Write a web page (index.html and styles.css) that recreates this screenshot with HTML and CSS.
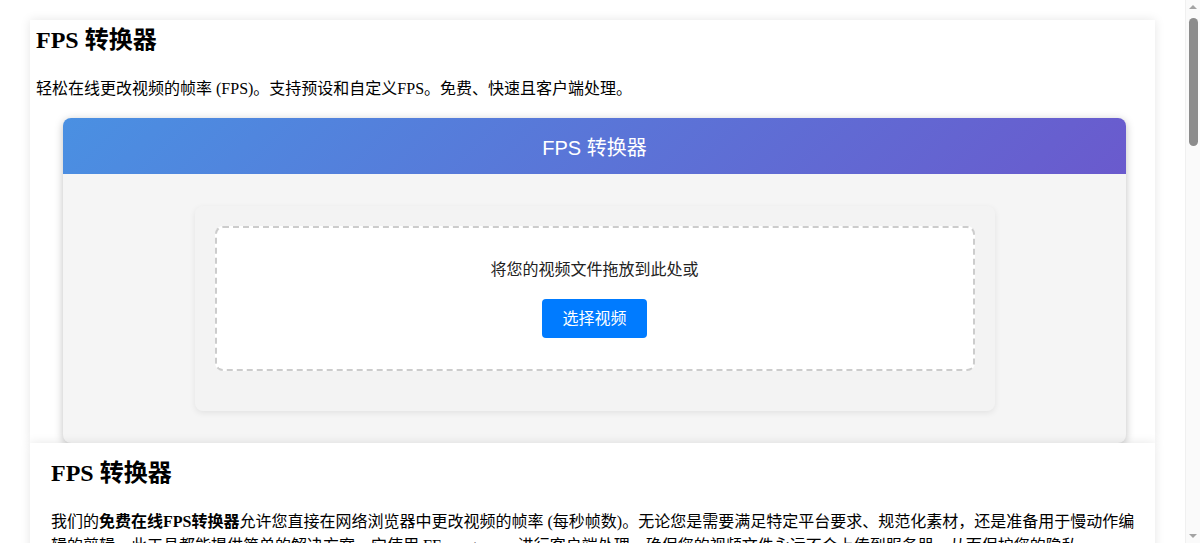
FILE: index.html
```html
<!DOCTYPE html>
<html lang="zh-CN">

<head>
    <meta charset="UTF-8">
    <meta name="viewport" content="width=device-width, initial-scale=1.0">
    <title>FPS 转换器</title>
    <link rel="stylesheet" href="styles.css">
</head>

<body>
    <div class="container">
        <h2>FPS 转换器</h2>
        <p>轻松在线更改视频的帧率 (FPS)。支持预设和自定义FPS。免费、快速且客户端处理。</p>

        <div class="tool-card">
            <div class="tool-header">FPS 转换器</div>
            <div class="tool-body">
                <div class="upload-panel">
                    <div class="drop-zone">
                        <p class="drop-text">将您的视频文件拖放到此处或</p>
                        <button class="btn-select">选择视频</button>
                    </div>
                </div>
            </div>
        </div>
    </div>

    <div class="container article">
        <h2>FPS 转换器</h2>
        <p>我们的<strong>免费在线FPS转换器</strong>允许您直接在网络浏览器中更改视频的帧率 (每秒帧数)。无论您是需要满足特定平台要求、规范化素材，还是准备用于慢动作编辑的剪辑，此工具都能提供简单的解决方案。它使用 FFmpeg.wasm进行客户端处理，确保您的视频文件永远不会上传到服务器，从而保护您的隐私。</p>

        <h3>如何使用</h3>
        <ol>
            <li>点击“选择视频”或将视频文件拖放到上传区域。</li>
            <li>从预设中选择目标帧率，或输入自定义FPS值。</li>
            <li>点击“转换”按钮并等待处理完成。</li>
            <li>预览结果并下载转换后的视频。</li>
        </ol>

        <h3>主要功能</h3>
        <ul>
            <li>支持常见预设：24、25、30、50、60 FPS。</li>
            <li>可输入任意自定义帧率。</li>
            <li>完全在浏览器中处理，无需上传。</li>
            <li>免费使用，无水印，无需注册。</li>
        </ul>

        <h3>常见问题</h3>
        <p><strong>更改帧率会影响视频质量吗？</strong></p>
        <p>降低帧率会丢弃部分帧，提高帧率会复制帧，画面清晰度不会受到明显影响。</p>
        <p><strong>支持哪些视频格式？</strong></p>
        <p>支持大多数常见格式，例如 MP4、WebM、MOV 和 AVI。</p>
        <p><strong>我的文件安全吗？</strong></p>
        <p>是的。所有处理都在您的设备上完成，文件永远不会离开您的电脑。</p>
    </div>

    <footer class="footer">
        <p>&copy; FPS 转换器</p>
    </footer>

    <!-- the window's scrollbar, drawn since the capture hides it -->
    <div class="scrollbar">
        <span class="arrow up"></span>
        <span class="thumb"></span>
        <span class="arrow down"></span>
    </div>
</body>

</html>
```

FILE: styles.css
```css
body {
    margin: 0 15px 0 0;
    font-family: "Liberation Serif", "Noto Sans CJK SC", serif;
    font-size: 16px;
    color: #000;
    background: #fff;
}

.container {
    margin: 20px 30px 0;
    padding: 0 6px;
    background: #fff;
    box-shadow: 0 0 10px rgba(0, 0, 0, 0.1);
}

.container h2 {
    margin: 0 0 20px;
    font-size: 24px;
}

.tool-card {
    margin: 19px 23px 0 27px;
    border-radius: 8px;
    overflow: hidden;
    background: #f5f5f5;
    box-shadow: 0 2px 8px rgba(0, 0, 0, 0.25);
    font-family: "Liberation Sans", "Noto Sans CJK SC", sans-serif;
}

.tool-header {
    height: 56px;
    display: flex;
    align-items: center;
    justify-content: center;
    background: linear-gradient(135deg, #4a90e2, #6a5acd);
    color: #fff;
    font-size: 20px;
}

.tool-body {
    padding: 32px;
}

.upload-panel {
    max-width: 760px;
    margin: 0 auto;
    padding: 20px 20px 40px;
    background: #f3f3f3;
    border-radius: 8px;
    box-shadow: 0 2px 6px rgba(0, 0, 0, 0.08);
}

.drop-zone {
    padding: 28px 30px 31px;
    border: 2px dashed #ccc;
    border-radius: 8px;
    background: #fff;
    text-align: center;
}

.drop-text {
    margin: 0 0 19px;
    font-size: 16px;
    color: #222;
}

.btn-select {
    padding: 8px 20px;
    border: none;
    border-radius: 4px;
    background: #007bff;
    color: #fff;
    font-family: inherit;
    font-size: 16px;
    line-height: 23px;
}

.article {
    margin-top: 0;
    padding: 10px 18px 20px 21px;
}

.article h3 {
    font-size: 19px;
}

.footer {
    padding: 30px;
    text-align: center;
    color: #666;
}

.scrollbar {
    position: fixed;
    top: 0;
    right: 0;
    width: 15px;
    height: 100vh;
    background: #fafafa;
    border-left: 1px solid #f0f0f0;
    box-sizing: border-box;
}

.thumb {
    position: absolute;
    top: 18px;
    left: 3px;
    width: 9px;
    height: 128px;
    border-radius: 5px;
    background: #8c8c8c;
}

.arrow {
    position: absolute;
    left: 3px;
    width: 0;
    height: 0;
    border-left: 4px solid transparent;
    border-right: 4px solid transparent;
}

.arrow.up {
    top: 5px;
    border-bottom: 4px solid #a3a3a3;
}

.arrow.down {
    bottom: 5px;
    border-top: 4px solid #a3a3a3;
}
```
